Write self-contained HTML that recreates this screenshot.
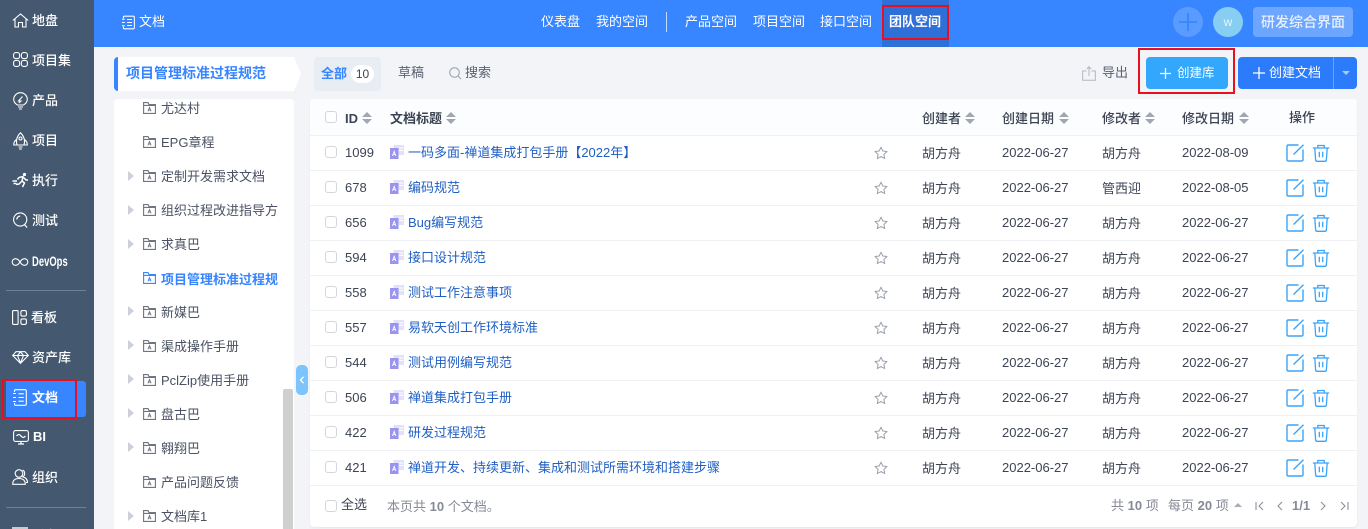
<!DOCTYPE html>
<html lang="zh"><head><meta charset="utf-8"><title>文档</title>
<style>
html{margin:0;padding:0;width:1368px;height:529px;overflow:hidden}
body{margin:0;padding:0;width:1368px;height:529px;overflow:hidden;position:relative;background:#f3f4f7;font-family:"Liberation Sans","Noto Sans CJK SC",sans-serif;font-size:13px;color:#3c4353}
.a,.t{position:absolute;white-space:nowrap}
.t{line-height:18px;height:18px;margin-top:1px}
svg{position:absolute;overflow:visible;fill:none}
.nav{color:#fff;font-size:13px;font-weight:500;left:32px}
.top{color:#fff;font-size:13px;top:12px}
.tree{font-size:13px;color:#4a5162;left:161px}
.fi{left:143px;width:13px;height:12px;stroke:#6e7480;stroke-width:1.1;margin-top:-1px}
.tri{position:absolute;left:128px;width:0;height:0;border-left:6px solid #ccd0d9;border-top:5px solid transparent;border-bottom:5px solid transparent}
.rowl{position:absolute;left:310px;width:1047px;height:1px;background:#f0f1f4}
.cb{position:absolute;left:325px;width:10px;height:10px;border:1px solid #d3d6dd;border-radius:3px;background:#fff}
.id{left:345px;color:#3c4353}
.lk{left:408px;color:#1f5fc4}
.c1{left:922px}.c2{left:1002px}.c3{left:1102px}.c4{left:1182px}
.h{font-weight:700;color:#3c4353;font-size:13px}
.up{position:absolute;width:0;height:0;border-left:5px solid transparent;border-right:5px solid transparent;border-bottom:5px solid #a1a6b0}
.dn{position:absolute;width:0;height:0;border-left:5px solid transparent;border-right:5px solid transparent;border-top:5px solid #a1a6b0}
.ic{stroke:#fff;stroke-width:1.1;left:12px;width:17px;height:17px}
</style></head><body>
<svg width="0" height="0" style="position:absolute"><defs>
<symbol id="folder" viewBox="0 0 13 12"><path d="M.6 2.5V11.4H12.4V2.5H6L5 .6H.6ZM.6 3.4H12.4"/><path d="M4.9 9.3 6.5 5.5 8.1 9.3M5.5 8H7.5" stroke-width=".9"/></symbol>
<symbol id="doc" viewBox="0 0 14 14"><rect x="3.500" y="0" width="10.500" height="10" fill="#e3e0fc"/><path d="M9 3H13M9 5.500H13" stroke="#fff"/><rect x="0" y="3" width="8.500" height="11" fill="#9a94ee"/><path d="M2.500 11 4.200 6.300 5.900 11M3.100 9.600H5.300" stroke="#fff" stroke-width=".9"/></symbol>
<symbol id="star" viewBox="0 0 14 14"><path d="M7 1.200 8.800 5 13 5.500 9.900 8.400 10.700 12.600 7 10.500 3.300 12.600 4.100 8.400 1 5.500 5.200 5Z" stroke="#9aa0ab" stroke-width="1" stroke-linejoin="round"/></symbol>
<symbol id="edit" viewBox="0 0 18 18"><path d="M12.500 1H2.200Q1 1 1 2.200V15.800Q1 17 2.200 17H15.800Q17 17 17 15.800V5.500" stroke="#3ba4f9" stroke-width="1.400"/><path d="M7.500 10.500 17.500.8" stroke="#3ba4f9" stroke-width="1.400"/></symbol>
<symbol id="trash" viewBox="0 0 18 18"><path d="M.8 4H17.200M5.800 4V1.500H12.200V4M2.800 4 3.600 15.800Q3.700 17.300 5.200 17.300H12.800Q14.300 17.300 14.400 15.800L15.200 4M7.300 7.800V13.300M10.700 7.800V13.300" stroke="#3ba4f9" stroke-width="1.300"/></symbol>
</defs></svg>

<!-- left nav -->
<div class="a" style="left:0;top:0;width:94px;height:529px;background:#44586f"></div>
<svg class="ic" style="top:13px;height:15px" viewBox="0 0 17 15"><path d="M.8 7.500 8.500 1 16.200 7.500M3 6V14H6.500V9.500H10.500V14H14V6"/></svg>
<div class="t nav" style="top:11px">地盘</div>
<svg class="ic" style="top:52px;left:13px;width:15px;height:15px" viewBox="0 0 15 15"><rect x=".6" y=".6" width="6" height="6" rx="2.200"/><rect x="8.400" y=".6" width="6" height="6" rx="2.200"/><rect x=".6" y="8.400" width="6" height="6" rx="2.200"/><rect x="8.400" y="8.400" width="6" height="6" rx="2.200"/></svg>
<div class="t nav" style="top:51px">项目集</div>
<svg class="ic" style="top:92px;left:13px;width:15px;height:18px" viewBox="0 0 15 18"><path d="M4.500 13C2.300 11.700 .7 10 .7 7.500A6.800 6.800 0 0 1 14.300 7.500C14.300 10 12.700 11.700 10.500 13ZM5 15H10M6 17H9M9.500 4.500 5.500 9H8L5.800 11"/></svg>
<div class="t nav" style="top:91px">产品</div>
<svg class="ic" style="top:132px;left:13px;width:15px;height:18px" viewBox="0 0 15 18"><path d="M4 13C3 10 3 5 7.500 .8 12 5 12 10 11 13ZM3.500 7.500C1.500 9 .6 10.500 .8 13H4M11.500 7.500C13.500 9 14.400 10.500 14.200 13H11M5.500 15H9.500M6 17H9"/><circle cx="7.500" cy="6.500" r="1.500"/></svg>
<div class="t nav" style="top:131px">项目</div>
<svg class="ic" style="top:172px;height:17px" viewBox="0 0 17 17"><circle cx="12.500" cy="2.500" r="1.600" fill="#fff" stroke="none"/><path d="M7 5.500 11 4.500 10 9 12.500 11 10.500 15M10 9 7 12 4 12.500M11.500 5.500 14 8H16M7 5.500 5.500 7.500M.5 9H5M1.500 11.500H4.500" stroke-width="1.500"/></svg>
<div class="t nav" style="top:171px">执行</div>
<svg class="ic" style="top:212px;left:13px;width:15px;height:17px" viewBox="0 0 15 17"><circle cx="7.200" cy="7.500" r="6.600"/><path d="M11.500 12.500 14 15.500M3.800 7.500A3.500 3.500 0 0 1 7.200 4" stroke-width="1.300"/></svg>
<div class="t nav" style="top:211px">测试</div>
<svg class="ic" style="top:258px;width:16px;height:8px" viewBox="0 0 16 8"><path d="M8 4C6.500 1.500 5 .7 3.500.7A3.300 3.300 0 0 0 3.500 7.300C5 7.300 6.500 6.500 8 4 9.500 1.500 11 .7 12.500.7A3.300 3.300 0 0 1 12.500 7.300C11 7.300 9.500 6.500 8 4Z"/></svg>
<div class="t nav" style="top:252px;font-size:13.500px;font-weight:700;transform:scaleX(.7);transform-origin:0 50%">DevOps</div>
<div class="a" style="left:6px;top:290px;width:80px;height:1px;background:#6f8196"></div>
<svg class="ic" style="top:310px;width:15px;height:15px" viewBox="0 0 15 15"><rect x=".6" y=".6" width="5.500" height="13.800" rx="1"/><rect x="8.900" y=".6" width="5.500" height="5.500" rx="1.500"/><rect x="8.900" y="8.900" width="5.500" height="5.500" rx="1.500"/></svg>
<div class="t nav" style="top:308px;left:31px">看板</div>
<svg class="ic" style="top:351px;left:12px;width:17px;height:13px" viewBox="0 0 17 13"><path d="M.7 4.500 4 .7H13L16.300 4.500 8.500 12.300ZM.7 4.500H16.300M5.500 4.500 8.500 12 11.500 4.500 8.500 1 5.500 4.500"/></svg>
<div class="t nav" style="top:348px">资产库</div>
<div class="a" style="left:6px;top:381px;width:80px;height:36px;background:#3785ff;border-radius:0 3px 3px 0"></div>
<div class="a" style="left:2px;top:379px;width:71px;height:36px;border:2px solid #e8101e"></div>
<svg class="ic" style="top:389px;left:13px;width:14px;height:17px" viewBox="0 0 14 17"><path d="M1.500 3V1.800Q1.500.7 2.600.7H12Q13.300.7 13.300 2V15Q13.300 16.300 12 16.300H2.600Q1.500 16.300 1.500 15V14M0 4.500H3M0 8.500H3M0 12.500H3M5.500 4.800H10.800M5.500 8.500H10.800M5.500 12.200H10.800"/></svg>
<div class="t nav" style="top:388px;font-weight:700">文档</div>
<svg class="ic" style="top:430px;left:13px;width:16px;height:15px" viewBox="0 0 16 15"><rect x=".6" y=".6" width="14.800" height="10.800" rx="2"/><path d="M3.500 6C5 4 6.500 4 8 6S11 8 12.500 6M8 11.500V13.500M5 14H11" stroke-width="1.300"/></svg>
<div class="t nav" style="top:427px;left:33px;font-size:13px;font-weight:700">BI</div>
<svg class="ic" style="top:469px;width:16px;height:16px" viewBox="0 0 16 16"><circle cx="7" cy="4.500" r="3.800"/><path d="M.7 15.300C.7 11.500 3 9.500 7 9.500S13.300 11.500 13.300 15.300ZM10.500 1.200C13 1.500 13.500 6.500 10.800 7.800 13.500 8.500 15.500 10.500 15.500 13.500H14"/></svg>
<div class="t nav" style="top:468px">组织</div>
<div class="a" style="left:6px;top:507px;width:80px;height:1px;background:#6f8196"></div>
<div class="a" style="left:12px;top:527px;width:16px;height:2px;background:#c3cbd4"></div>
<div class="t nav" style="top:526px;opacity:.8">后台</div>

<!-- top bar -->
<div class="a" style="left:94px;top:0;width:1274px;height:47px;background:#3785ff"></div>
<svg class="ic" style="top:15px;left:122px;width:13px;height:15px" viewBox="0 0 14 15"><path d="M1.500 3V1.800Q1.500.7 2.600.7H12Q13.300.7 13.300 2V13Q13.300 14.300 12 14.300H2.600Q1.500 14.300 1.500 13V12M0 4H3M0 7.500H3M0 11H3M5.500 4.300H10.800M5.500 7.500H10.800M5.500 10.700H10.800"/></svg>
<div class="t top" style="left:139px">文档</div>
<div class="t top" style="left:541px">仪表盘</div>
<div class="t top" style="left:596px">我的空间</div>
<div class="a" style="left:666px;top:12px;width:1px;height:20px;background:#c4dcff"></div>
<div class="t top" style="left:685px">产品空间</div>
<div class="t top" style="left:753px">项目空间</div>
<div class="t top" style="left:820px">接口空间</div>
<div class="a" style="left:882px;top:0;width:67px;height:47px;background:#2f6fd8"></div>
<div class="a" style="left:882px;top:5px;width:63px;height:31px;border:2px solid #e8101e"></div>
<div class="t top" style="left:889px;font-weight:700">团队空间</div>
<div class="a" style="left:1173px;top:7px;width:30px;height:30px;border-radius:50%;background:#5a9bff"></div>
<svg style="left:1178px;top:12px;width:20px;height:20px" viewBox="0 0 20 20"><path d="M10 1V19M1 10H19" stroke="#3785ff" stroke-width="1.800"/></svg>
<div class="a" style="left:1213px;top:7px;width:30px;height:30px;border-radius:50%;background:#88cdf2;color:#e8f5fd;text-align:center;line-height:30px;font-size:12px">w</div>
<div class="a" style="left:1253px;top:7px;width:100px;height:30px;border-radius:4px;background:#6da6ff;color:#e9f1ff;text-align:center;line-height:30px;font-size:14px;font-weight:500">研发综合界面</div>

<!-- tree -->
<div class="a" style="left:114px;top:57px;width:180px;height:34px;background:#fff;border-radius:4px 0 0 4px"></div>
<div class="a" style="left:114px;top:57px;width:4px;height:34px;background:#3785ff;border-radius:4px 0 0 4px"></div>
<svg style="left:294px;top:57px;width:8px;height:34px" viewBox="0 0 8 34"><path d="M0 0 7 17 0 34Z" fill="#fff"/></svg>
<div class="t" style="left:126px;top:63px;color:#3785ff;font-weight:700;font-size:14px">项目管理标准过程规范</div>
<div class="a" style="left:114px;top:99px;width:180px;height:430px;background:#fff;border-radius:4px 4px 0 0"></div>
<div class="a" style="left:283px;top:389px;width:10px;height:140px;background:#cfcfcf;border-radius:2px 2px 0 0"></div>

<svg class="fi" style="top:103px"><use href="#folder"/></svg><div class="t tree" style="top:99px">尤达村</div>
<svg class="fi" style="top:137px"><use href="#folder"/></svg><div class="t tree" style="top:133px">EPG章程</div>
<i class="tri" style="top:171px"></i><svg class="fi" style="top:171px"><use href="#folder"/></svg><div class="t tree" style="top:167px">定制开发需求文档</div>
<i class="tri" style="top:205px"></i><svg class="fi" style="top:205px"><use href="#folder"/></svg><div class="t tree" style="top:201px">组织过程改进指导方</div>
<i class="tri" style="top:239px"></i><svg class="fi" style="top:239px"><use href="#folder"/></svg><div class="t tree" style="top:235px">求真巴</div>
<svg class="fi" style="top:273px;stroke:#3785ff"><use href="#folder"/></svg><div class="t tree" style="top:270px;color:#3785ff;font-weight:700">项目管理标准过程规</div>
<i class="tri" style="top:306px"></i><svg class="fi" style="top:307px"><use href="#folder"/></svg><div class="t tree" style="top:303px">新媒巴</div>
<i class="tri" style="top:340px"></i><svg class="fi" style="top:341px"><use href="#folder"/></svg><div class="t tree" style="top:337px">渠成操作手册</div>
<i class="tri" style="top:374px"></i><svg class="fi" style="top:375px"><use href="#folder"/></svg><div class="t tree" style="top:371px">PclZip使用手册</div>
<i class="tri" style="top:408px"></i><svg class="fi" style="top:409px"><use href="#folder"/></svg><div class="t tree" style="top:405px">盘古巴</div>
<i class="tri" style="top:442px"></i><svg class="fi" style="top:443px"><use href="#folder"/></svg><div class="t tree" style="top:439px">翱翔巴</div>
<svg class="fi" style="top:477px"><use href="#folder"/></svg><div class="t tree" style="top:473px">产品问题反馈</div>
<i class="tri" style="top:511px"></i><svg class="fi" style="top:511px"><use href="#folder"/></svg><div class="t tree" style="top:507px">文档库1</div>

<div class="a" style="left:296px;top:365px;width:12px;height:30px;background:#7cc4fb;border-radius:5px"></div>
<svg style="left:299px;top:376px;width:6px;height:8px" viewBox="0 0 6 8"><path d="M4.500.8 1.500 4 4.500 7.200" stroke="#fff" stroke-width="1.300"/></svg>

<!-- toolbar -->
<div class="a" style="left:314px;top:57px;width:67px;height:34px;background:#e8ecf3;border-radius:4px"></div>
<div class="t" style="left:321px;top:64px;color:#3785ff;font-weight:700">全部</div>
<div class="a" style="left:351px;top:65px;width:23px;height:18px;background:#fff;border-radius:9px;text-align:center;line-height:18px;font-size:12px;color:#3c4353">10</div>
<div class="t" style="left:398px;top:63px;color:#5a6070">草稿</div>
<svg style="left:449px;top:67px;width:13px;height:13px" viewBox="0 0 13 13"><circle cx="5.500" cy="5.500" r="4.800" stroke="#9a9fa9"/><path d="M9 9 12 12" stroke="#9a9fa9"/></svg>
<div class="t" style="left:465px;top:63px;color:#5a6070">搜索</div>
<svg style="left:1082px;top:66px;width:14px;height:15px" viewBox="0 0 14 15"><path d="M4.500 5H.7V14.300H13.300V5H9.500M7 10V1M4.800 3 7 .8 9.200 3" stroke="#b2b6be"/></svg>
<div class="t" style="left:1102px;top:63px;color:#5a6070">导出</div>
<div class="a" style="left:1146px;top:57px;width:82px;height:32px;background:#33a7fc;border-radius:4px"></div>
<svg style="left:1160px;top:68px;width:11px;height:11px" viewBox="0 0 11 11"><path d="M5.500 0V11M0 5.500H11" stroke="#fff" stroke-width="1.300"/></svg>
<div class="t" style="left:1177px;top:63px;color:#fff;font-size:12.500px">创建库</div>
<div class="a" style="left:1138px;top:48px;width:93px;height:42px;border:2px solid #e8101e"></div>
<div class="a" style="left:1238px;top:57px;width:119px;height:32px;background:#2c7bfb;border-radius:4px"></div>
<svg style="left:1253px;top:67px;width:12px;height:12px" viewBox="0 0 12 12"><path d="M6 0V12M0 6H12" stroke="#fff" stroke-width="1.300"/></svg>
<div class="t" style="left:1269px;top:63px;color:#fff">创建文档</div>
<div class="a" style="left:1333px;top:57px;width:1px;height:32px;background:#6aa3fc"></div>
<div class="a" style="left:1342px;top:71px;width:0;height:0;border-left:4px solid transparent;border-right:4px solid transparent;border-top:4px solid #a9c9fc"></div>

<!-- table -->
<div class="a" style="left:310px;top:99px;width:1047px;height:428px;background:#fff;border-radius:4px;box-shadow:0 1px 2px rgba(0,0,0,.06)"></div>
<div class="a" style="left:310px;top:99px;width:1047px;height:36px;background:#fcfdfe;border-radius:4px 4px 0 0"></div>
<div class="rowl" style="top:135px"></div><div class="rowl" style="top:170px"></div><div class="rowl" style="top:205px"></div><div class="rowl" style="top:240px"></div><div class="rowl" style="top:275px"></div><div class="rowl" style="top:310px"></div><div class="rowl" style="top:345px"></div><div class="rowl" style="top:380px"></div><div class="rowl" style="top:415px"></div><div class="rowl" style="top:450px"></div><div class="rowl" style="top:485px"></div>

<div class="cb" style="top:111px"></div>
<div class="t h" style="left:345px;top:109px">ID</div><i class="up" style="left:362px;top:112px"></i><i class="dn" style="left:362px;top:119px"></i>
<div class="t h" style="left:390px;top:109px">文档标题</div><i class="up" style="left:446px;top:112px"></i><i class="dn" style="left:446px;top:119px"></i>
<div class="t h" style="left:922px;top:109px;font-weight:500">创建者</div><i class="up" style="left:965px;top:112px"></i><i class="dn" style="left:965px;top:119px"></i>
<div class="t h" style="left:1002px;top:109px;font-weight:500">创建日期</div><i class="up" style="left:1059px;top:112px"></i><i class="dn" style="left:1059px;top:119px"></i>
<div class="t h" style="left:1102px;top:109px;font-weight:500">修改者</div><i class="up" style="left:1145px;top:112px"></i><i class="dn" style="left:1145px;top:119px"></i>
<div class="t h" style="left:1182px;top:109px;font-weight:500">修改日期</div><i class="up" style="left:1239px;top:112px"></i><i class="dn" style="left:1239px;top:119px"></i>
<div class="t h" style="left:1289px;top:108px;font-weight:500">操作</div>

<div class="cb" style="top:146px"></div><div class="t id" style="top:143px">1099</div><svg style="left:390px;top:145px;width:14px;height:14px"><use href="#doc"/></svg><div class="t lk" style="top:143px">一码多面-禅道集成打包手册【2022年】</div><svg style="left:874px;top:146px;width:14px;height:14px"><use href="#star"/></svg><div class="t c1" style="top:144px">胡方舟</div><div class="t c2" style="top:143px">2022-06-27</div><div class="t c3" style="top:144px">胡方舟</div><div class="t c4" style="top:143px">2022-08-09</div><svg style="left:1286px;top:144px;width:18px;height:18px"><use href="#edit"/></svg><svg style="left:1312px;top:144px;width:18px;height:18px"><use href="#trash"/></svg>

<div class="cb" style="top:181px"></div><div class="t id" style="top:178px">678</div><svg style="left:390px;top:180px;width:14px;height:14px"><use href="#doc"/></svg><div class="t lk" style="top:178px">编码规范</div><svg style="left:874px;top:181px;width:14px;height:14px"><use href="#star"/></svg><div class="t c1" style="top:179px">胡方舟</div><div class="t c2" style="top:178px">2022-06-27</div><div class="t c3" style="top:179px">管西迎</div><div class="t c4" style="top:178px">2022-08-05</div><svg style="left:1286px;top:179px;width:18px;height:18px"><use href="#edit"/></svg><svg style="left:1312px;top:179px;width:18px;height:18px"><use href="#trash"/></svg>

<div class="cb" style="top:216px"></div><div class="t id" style="top:213px">656</div><svg style="left:390px;top:215px;width:14px;height:14px"><use href="#doc"/></svg><div class="t lk" style="top:213px">Bug编写规范</div><svg style="left:874px;top:216px;width:14px;height:14px"><use href="#star"/></svg><div class="t c1" style="top:214px">胡方舟</div><div class="t c2" style="top:213px">2022-06-27</div><div class="t c3" style="top:214px">胡方舟</div><div class="t c4" style="top:213px">2022-06-27</div><svg style="left:1286px;top:214px;width:18px;height:18px"><use href="#edit"/></svg><svg style="left:1312px;top:214px;width:18px;height:18px"><use href="#trash"/></svg>

<div class="cb" style="top:251px"></div><div class="t id" style="top:248px">594</div><svg style="left:390px;top:250px;width:14px;height:14px"><use href="#doc"/></svg><div class="t lk" style="top:248px">接口设计规范</div><svg style="left:874px;top:251px;width:14px;height:14px"><use href="#star"/></svg><div class="t c1" style="top:249px">胡方舟</div><div class="t c2" style="top:248px">2022-06-27</div><div class="t c3" style="top:249px">胡方舟</div><div class="t c4" style="top:248px">2022-06-27</div><svg style="left:1286px;top:249px;width:18px;height:18px"><use href="#edit"/></svg><svg style="left:1312px;top:249px;width:18px;height:18px"><use href="#trash"/></svg>

<div class="cb" style="top:286px"></div><div class="t id" style="top:283px">558</div><svg style="left:390px;top:285px;width:14px;height:14px"><use href="#doc"/></svg><div class="t lk" style="top:283px">测试工作注意事项</div><svg style="left:874px;top:286px;width:14px;height:14px"><use href="#star"/></svg><div class="t c1" style="top:284px">胡方舟</div><div class="t c2" style="top:283px">2022-06-27</div><div class="t c3" style="top:284px">胡方舟</div><div class="t c4" style="top:283px">2022-06-27</div><svg style="left:1286px;top:284px;width:18px;height:18px"><use href="#edit"/></svg><svg style="left:1312px;top:284px;width:18px;height:18px"><use href="#trash"/></svg>

<div class="cb" style="top:321px"></div><div class="t id" style="top:318px">557</div><svg style="left:390px;top:320px;width:14px;height:14px"><use href="#doc"/></svg><div class="t lk" style="top:318px">易软天创工作环境标准</div><svg style="left:874px;top:321px;width:14px;height:14px"><use href="#star"/></svg><div class="t c1" style="top:319px">胡方舟</div><div class="t c2" style="top:318px">2022-06-27</div><div class="t c3" style="top:319px">胡方舟</div><div class="t c4" style="top:318px">2022-06-27</div><svg style="left:1286px;top:319px;width:18px;height:18px"><use href="#edit"/></svg><svg style="left:1312px;top:319px;width:18px;height:18px"><use href="#trash"/></svg>

<div class="cb" style="top:356px"></div><div class="t id" style="top:353px">544</div><svg style="left:390px;top:355px;width:14px;height:14px"><use href="#doc"/></svg><div class="t lk" style="top:353px">测试用例编写规范</div><svg style="left:874px;top:356px;width:14px;height:14px"><use href="#star"/></svg><div class="t c1" style="top:354px">胡方舟</div><div class="t c2" style="top:353px">2022-06-27</div><div class="t c3" style="top:354px">胡方舟</div><div class="t c4" style="top:353px">2022-06-27</div><svg style="left:1286px;top:354px;width:18px;height:18px"><use href="#edit"/></svg><svg style="left:1312px;top:354px;width:18px;height:18px"><use href="#trash"/></svg>

<div class="cb" style="top:391px"></div><div class="t id" style="top:388px">506</div><svg style="left:390px;top:390px;width:14px;height:14px"><use href="#doc"/></svg><div class="t lk" style="top:388px">禅道集成打包手册</div><svg style="left:874px;top:391px;width:14px;height:14px"><use href="#star"/></svg><div class="t c1" style="top:389px">胡方舟</div><div class="t c2" style="top:388px">2022-06-27</div><div class="t c3" style="top:389px">胡方舟</div><div class="t c4" style="top:388px">2022-06-27</div><svg style="left:1286px;top:389px;width:18px;height:18px"><use href="#edit"/></svg><svg style="left:1312px;top:389px;width:18px;height:18px"><use href="#trash"/></svg>

<div class="cb" style="top:426px"></div><div class="t id" style="top:423px">422</div><svg style="left:390px;top:425px;width:14px;height:14px"><use href="#doc"/></svg><div class="t lk" style="top:423px">研发过程规范</div><svg style="left:874px;top:426px;width:14px;height:14px"><use href="#star"/></svg><div class="t c1" style="top:424px">胡方舟</div><div class="t c2" style="top:423px">2022-06-27</div><div class="t c3" style="top:424px">胡方舟</div><div class="t c4" style="top:423px">2022-06-27</div><svg style="left:1286px;top:424px;width:18px;height:18px"><use href="#edit"/></svg><svg style="left:1312px;top:424px;width:18px;height:18px"><use href="#trash"/></svg>

<div class="cb" style="top:461px"></div><div class="t id" style="top:458px">421</div><svg style="left:390px;top:460px;width:14px;height:14px"><use href="#doc"/></svg><div class="t lk" style="top:458px">禅道开发、持续更新、集成和测试所需环境和搭建步骤</div><svg style="left:874px;top:461px;width:14px;height:14px"><use href="#star"/></svg><div class="t c1" style="top:459px">胡方舟</div><div class="t c2" style="top:458px">2022-06-27</div><div class="t c3" style="top:459px">胡方舟</div><div class="t c4" style="top:458px">2022-06-27</div><svg style="left:1286px;top:459px;width:18px;height:18px"><use href="#edit"/></svg><svg style="left:1312px;top:459px;width:18px;height:18px"><use href="#trash"/></svg>

<!-- footer -->
<div class="cb" style="top:500px"></div>
<div class="t" style="left:341px;top:495px">全选</div>
<div class="t" style="left:387px;top:497px;color:#858a96">本页共 <b>10</b> 个文档。</div>
<div class="t" style="left:1111px;top:496px;color:#858a96">共 <b>10</b> 项</div>
<div class="t" style="left:1168px;top:496px;color:#858a96">每页 <b>20</b> 项</div>
<div class="a" style="left:1234px;top:503px;width:0;height:0;border-left:4px solid transparent;border-right:4px solid transparent;border-bottom:4px solid #a8acb6"></div>
<svg style="left:1255px;top:501px;width:10px;height:10px" viewBox="0 0 10 10"><path d="M1 1V9M8 1 4 5 8 9" stroke="#8c919c" stroke-width="1.100"/></svg>
<svg style="left:1277px;top:501px;width:6px;height:10px" viewBox="0 0 6 10"><path d="M5 1 1 5 5 9" stroke="#8c919c" stroke-width="1.100"/></svg>
<div class="t" style="left:1292px;top:496px;color:#858a96;font-weight:700">1/1</div>
<svg style="left:1320px;top:501px;width:6px;height:10px" viewBox="0 0 6 10"><path d="M1 1 5 5 1 9" stroke="#8c919c" stroke-width="1.100"/></svg>
<svg style="left:1339px;top:501px;width:10px;height:10px" viewBox="0 0 10 10"><path d="M2 1 6 5 2 9M9 1V9" stroke="#8c919c" stroke-width="1.100"/></svg>
</body></html>
